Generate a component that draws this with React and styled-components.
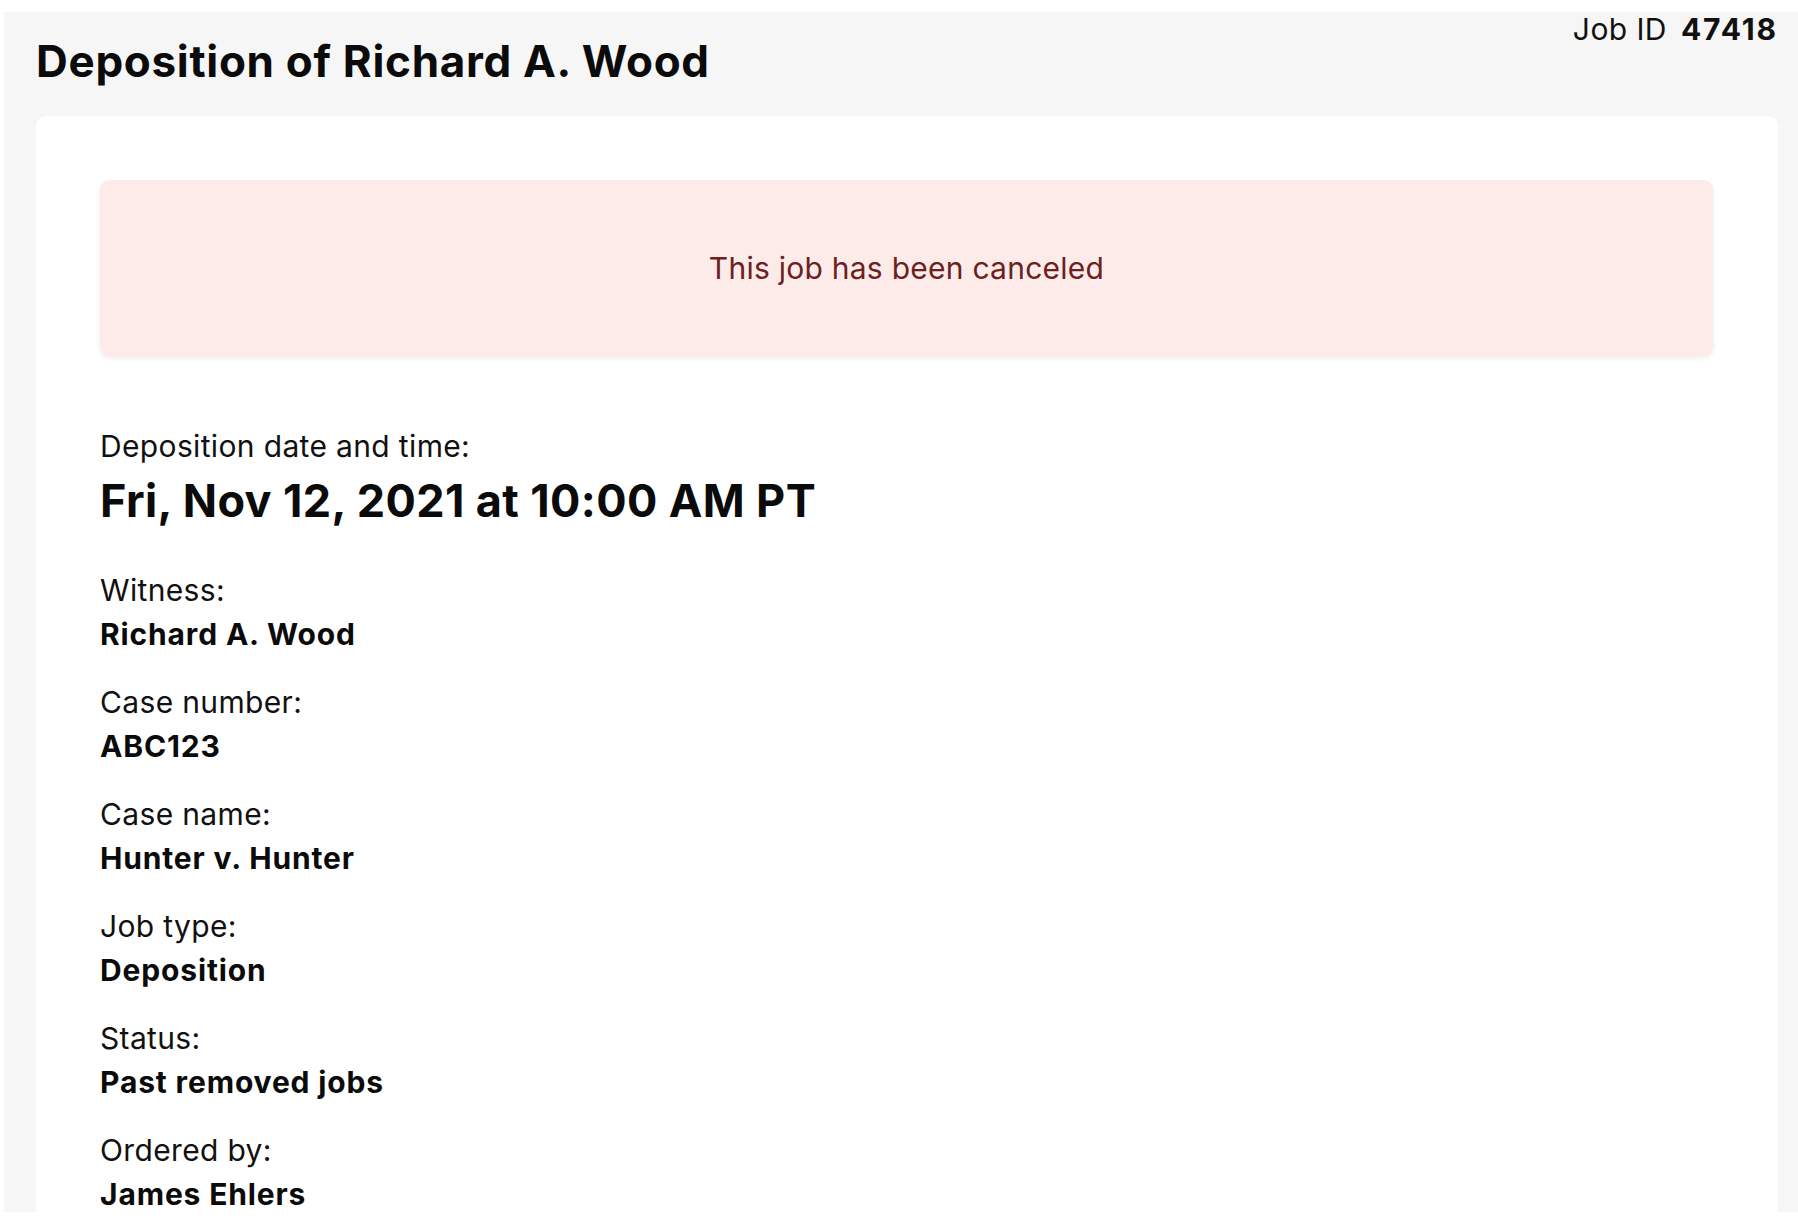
import React from 'react';
import styled, { createGlobalStyle } from 'styled-components';

const GlobalStyle = createGlobalStyle`
  html, body {
    margin: 0;
    padding: 0;
    background: #ffffff;
  }
  body {
    font-family: Inter, "Noto Sans", "Liberation Sans", sans-serif;
    color: #111111;
    -webkit-font-smoothing: antialiased;
  }
`

const Page = styled.div`
  margin: 12px 0 0 4px;
  height: 1200px;
  overflow: hidden;
  background: #f6f6f6;
  padding: 0 20px 0 32px;
  box-sizing: border-box;
`

const Header = styled.header`
  display: flex;
  justify-content: space-between;
  align-items: flex-start;
  height: 104px;
`

const Title = styled.h1`
  margin: 23px 0 0;
  font-size: 44px;
  line-height: 52px;
  font-weight: 700;
  letter-spacing: 0.7px;
  color: #0b0b0b;
`

const JobId = styled.div`
  display: flex;
  gap: 14px;
  margin: -1px 0 0 0;
  font-size: 30px;
  line-height: 36px;
  letter-spacing: 0.4px;
  color: #111111;

  strong {
    font-weight: 700;
    letter-spacing: 1.9px;
  }
`

const Card = styled.section`
  background: #ffffff;
  border-radius: 10px 10px 0 0;
  padding: 64px 65px 40px 64px;
  min-height: 1200px;
  box-sizing: border-box;
`

const Banner = styled.div`
  display: flex;
  align-items: center;
  justify-content: center;
  height: 176px;
  border-radius: 10px;
  background: #fdebea;
  box-shadow: 0 2px 5px rgba(0, 0, 0, 0.08);
  color: #6c2020;
  font-size: 30px;
  line-height: 36px;
  letter-spacing: 0.25px;
`

const DateBlock = styled.div`
  display: flex;
  flex-direction: column;
  gap: 10px;
  margin: 72px 0 44px;
`

const Label = styled.div`
  font-size: 30px;
  line-height: 36px;
  font-weight: 400;
  letter-spacing: 0.35px;
  color: #111111;
`

const BigValue = styled.div`
  font-size: 45px;
  line-height: 54px;
  font-weight: 700;
  letter-spacing: 0.4px;
  color: #0b0b0b;
`

const Details = styled.dl`
  display: flex;
  flex-direction: column;
  gap: 32px;
  margin: 0;
`

const Item = styled.div`
  display: flex;
  flex-direction: column;
`

const Term = styled(Label).attrs({ as: 'dt' })``

const Value = styled.dd`
  margin: 8px 0 0;
  font-size: 30px;
  line-height: 36px;
  font-weight: 700;
  letter-spacing: 0.85px;
  color: #0b0b0b;
`

const details = [
  ['Witness:', 'Richard A. Wood'],
  ['Case number:', 'ABC123'],
  ['Case name:', 'Hunter v. Hunter'],
  ['Job type:', 'Deposition'],
  ['Status:', 'Past removed jobs'],
  ['Ordered by:', 'James Ehlers'],
]

export default function App() {
  return (
    <>
      <GlobalStyle />
      <Page>
        <Header>
          <Title>Deposition of Richard A. Wood</Title>
          <JobId>
            <span>Job ID</span>
            <strong>47418</strong>
          </JobId>
        </Header>
        <Card>
          <Banner>This job has been canceled</Banner>
          <DateBlock>
            <Label>Deposition date and time:</Label>
            <BigValue>Fri, Nov 12, 2021 at 10:00 AM PT</BigValue>
          </DateBlock>
          <Details>
            {details.map(([term, value]) => (
              <Item key={term}>
                <Term>{term}</Term>
                <Value>{value}</Value>
              </Item>
            ))}
          </Details>
        </Card>
      </Page>
    </>
  )
}
